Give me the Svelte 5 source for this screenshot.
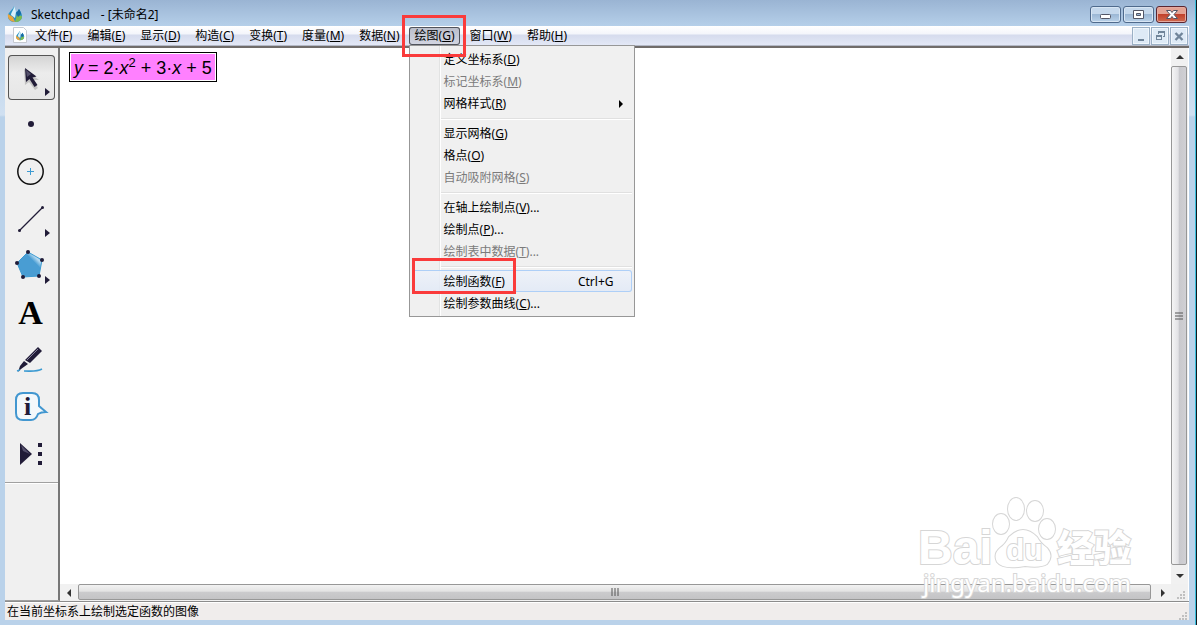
<script lang="ts">
  type Entry = { label: string; key: string; more?: boolean; disabled?: boolean; submenu?: boolean; shortcut?: string };

  const menus = [
    { label: '文件', key: 'F' },
    { label: '编辑', key: 'E' },
    { label: '显示', key: 'D' },
    { label: '构造', key: 'C' },
    { label: '变换', key: 'T' },
    { label: '度量', key: 'M' },
    { label: '数据', key: 'N' },
    { label: '绘图', key: 'G' },
    { label: '窗口', key: 'W' },
    { label: '帮助', key: 'H' }
  ];

  const graphMenu: Entry[][] = [
    [
      { label: '定义坐标系', key: 'D' },
      { label: '标记坐标系', key: 'M', disabled: true },
      { label: '网格样式', key: 'R', submenu: true }
    ],
    [
      { label: '显示网格', key: 'G' },
      { label: '格点', key: 'O' },
      { label: '自动吸附网格', key: 'S', disabled: true }
    ],
    [
      { label: '在轴上绘制点', key: 'V', more: true },
      { label: '绘制点', key: 'P', more: true },
      { label: '绘制表中数据', key: 'T', more: true, disabled: true }
    ],
    [
      { label: '绘制函数', key: 'F', shortcut: 'Ctrl+G' },
      { label: '绘制参数曲线', key: 'C', more: true }
    ]
  ];

  const tools = ['arrow', 'point', 'compass', 'line', 'polygon', 'text', 'marker', 'info', 'custom'];

  let openMenu = $state('G');
  let activeEntry = $state('绘制函数');
  let activeTool = $state('arrow');
</script>

{#snippet logo()}
  <path d="M7 0 C6 4 1 6 1 10 C1 14 4 16 8 16 C12 16 15 14 15 10 C15 7 13 5 12 3 C11 5 10 6 9 6 C9 4 8 2 7 0Z" fill="#2b93c4" />
  <path d="M7 0 C7 4 4 6 4 9 L8 12 L9 6 C9 4 8 2 7 0Z" fill="#d9f1fa" />
  <path d="M1 8 C0 12 3 16 8 16 L6 11Z" fill="#e9a43c" />
  <path d="M8 16 C12 16 15 14 15 10 L10 9Z" fill="#7dbb52" />
  <path d="M12 3 C11 5 10 6 9 7 L11 11 L14 8 C14 6 13 5 12 3Z" fill="#176aa4" />
{/snippet}

<div class="window">
  <header class="title-bar">
    <svg class="app-icon" viewBox="0 0 16 16" aria-hidden="true">{@render logo()}</svg>
    <h1><span>Sketchpad</span><span>- [未命名2]</span></h1>
    <div class="window-buttons">
      <button aria-label="最小化">
        <svg viewBox="0 0 29 16"><rect x="9.5" y="7.5" width="10" height="4" rx="1" fill="#fff" stroke="#535666" /></svg>
      </button>
      <button aria-label="还原">
        <svg viewBox="0 0 29 16"><path d="M9.5 3.5h10v8h-10z M12.5 6.5h4v2h-4z" fill="#fff" fill-rule="evenodd" stroke="#535666" /></svg>
      </button>
      <button class="close" aria-label="关闭">
        <svg viewBox="0 0 29 16"><path d="M9.5 3.5h4l1.500 2 1.500-2h4l-3.500 4 3.500 4h-4l-1.500-2-1.500 2h-4l3.500-4z" fill="#fff" stroke="#535666" /></svg>
      </button>
    </div>
  </header>

  <nav class="menu-bar">
    <svg class="doc-icon" viewBox="0 0 14 16" aria-hidden="true">
      <path d="M.5 .5h10l3 3v12H.5z" fill="#fff" stroke="#c4c8d0" />
      <g transform="translate(2.500 4) scale(.58)">{@render logo()}</g>
    </svg>
    {#each menus as menu}
      <div class="menu">
        <button class="menu-title" class:open={openMenu === menu.key} onclick={() => (openMenu = openMenu === menu.key ? '' : menu.key)}>
          {menu.label}(<u>{menu.key}</u>)
        </button>
        {#if menu.key === 'G' && openMenu === 'G'}
          <div class="dropdown">
            {#each graphMenu as group}
              <div class="group">
                {#each group as entry}
                  <button
                    class="entry"
                    class:active={entry.label === activeEntry}
                    disabled={entry.disabled}
                    onmouseenter={() => (activeEntry = entry.label)}
                  >
                    <span>{entry.label}(<u>{entry.key}</u>){entry.more ? '...' : ''}</span>
                    {#if entry.shortcut}
                      <span>{entry.shortcut}</span>
                    {/if}
                    {#if entry.submenu}
                      <svg class="submenu" viewBox="0 0 4 8"><path d="M0 0l4 4-4 4z" /></svg>
                    {/if}
                    {#if entry.shortcut}
                      <i class="mark mark-entry"></i>
                    {/if}
                  </button>
                {/each}
              </div>
            {/each}
          </div>
          <i class="mark mark-title"></i>
        {/if}
      </div>
    {/each}
    <div class="doc-buttons">
      <button aria-label="最小化文档"><svg viewBox="0 0 16 16"><path d="M5 11h6v2H5z" /></svg></button>
      <button aria-label="还原文档"><svg viewBox="0 0 16 16"><path d="M6 3h7v6h-2V8h1V5H7v1H6z M4 7h6v5H4z M5 9v2h4V9z" fill-rule="evenodd" /></svg></button>
      <button aria-label="关闭文档"><svg viewBox="0 0 16 16"><path d="M4.500 5l7 7M11.500 5l-7 7" stroke="#70859a" stroke-width="2.400" /></svg></button>
    </div>
  </nav>

  <main class="workspace">
    <aside class="toolbox">
      <div class="tools">
        {#each tools as tool}
          <button class="tool" class:selected={activeTool === tool} aria-label={tool} onclick={() => (activeTool = tool)}>
            <svg viewBox="0 0 47 45">
              {#if tool === 'arrow'}
                <path d="M16 14l1 16 4-3 6 8 3-2-5-8h6z" fill="#777" opacity=".35" />
                <path d="M17 13l1 14 3.500-3 5 8 3-2-5-7.500 4-1z" fill="#211c38" />
                <path d="M18 15l1 7 4-3z" fill="#8886a0" opacity=".5" />
              {:else if tool === 'point'}
                <circle cx="23" cy="22" r="3" fill="#211c38" />
              {:else if tool === 'compass'}
                <circle cx="22.500" cy="22.500" r="12.700" fill="none" stroke="#111" stroke-width="1.500" />
                <path d="M19 22.500h7M22.500 19v7" stroke="#3d9bd2" />
              {:else if tool === 'line'}
                <path d="M11 35L34 12" stroke="#211c38" stroke-width="1.200" />
                <circle cx="11.500" cy="34.500" r="1.500" fill="#211c38" />
                <circle cx="34.500" cy="11.500" r="1.500" fill="#211c38" />
              {:else if tool === 'polygon'}
                <defs>
                  <linearGradient id="facet" x1="1" y1="0" x2=".4" y2=".6">
                    <stop offset=".2" stop-color="#5aa9db" />
                    <stop offset=".38" stop-color="#b9dcf2" />
                    <stop offset=".6" stop-color="#499dd3" />
                  </linearGradient>
                </defs>
                <path d="M20 9L34 17 31 33 15 34 9 20z" fill="url(#facet)" stroke="#3d9bd2" />
                <g fill="#211c38">
                  <circle cx="20" cy="9" r="2" /><circle cx="34" cy="17" r="2" /><circle cx="31" cy="33" r="2" />
                  <circle cx="15" cy="34" r="2" /><circle cx="9" cy="20" r="2" />
                </g>
              {:else if tool === 'text'}
                <text x="22.500" y="34" text-anchor="middle" class="letter">A</text>
              {:else if tool === 'marker'}
                <path d="M30 10l4 4-12 12-5-3z" fill="#211c38" />
                <path d="M16 24l4 3-7 5-3 3 2-6z" fill="#211c38" />
                <path d="M30 12L19 23" stroke="#85819b" />
                <path d="M9 34l3-1M16 34c8 0 12 1 18-2" fill="none" stroke="#3d9bd2" stroke-width="1.600" />
              {:else if tool === 'info'}
                <path d="M15 9h9q7 0 7 7v6l7 6q-5 0-8 2-2 6-7 6h-8q-7 0-7-7V16q0-7 7-7z" fill="#f3f8fb" stroke="#4297d0" stroke-width="2" />
                <text x="19.500" y="31" text-anchor="middle" class="info">i</text>
              {:else}
                <path d="M12 12l12 11-12 11z" fill="#211c38" />
                <path d="M13 14l9 9-7-3z" fill="#777390" opacity=".6" />
                <path d="M30 12h4v4h-4zM30 21h4v4h-4zM30 30h4v4h-4z" fill="#211c38" />
              {/if}
              {#if tool === 'arrow' || tool === 'line' || tool === 'polygon'}
                <path d="M37 33l5 4-5 4z" fill="#211c38" />
              {/if}
            </svg>
          </button>
        {/each}
      </div>
    </aside>

    <section class="document">
      <div class="canvas">
        <div class="formula"><i>y</i> = 2·<i>x</i><sup>2</sup> + 3·<i>x</i> + 5</div>
      </div>
      <div class="scroll vertical">
        <button aria-label="向上滚动"><svg viewBox="0 0 8 8"><path d="M0 6l4-4 4 4z" /></svg></button>
        <div class="thumb"><svg viewBox="0 0 8 8"><path d="M0 1h8M0 4h8M0 7h8" stroke="#555" /></svg></div>
        <button aria-label="向下滚动"><svg viewBox="0 0 8 8"><path d="M0 2l4 4 4-4z" /></svg></button>
      </div>
      <div class="scroll horizontal">
        <button aria-label="向左滚动"><svg viewBox="0 0 8 8"><path d="M6 0L2 4l4 4z" /></svg></button>
        <div class="thumb"><svg viewBox="0 0 8 8"><path d="M1 0v8M4 0v8M7 0v8" stroke="#555" /></svg></div>
        <button aria-label="向右滚动"><svg viewBox="0 0 8 8"><path d="M2 0l4 4-4 4z" /></svg></button>
      </div>
      <div class="corner">
        <svg class="grip" viewBox="0 0 8 8"><path d="M6 0h2v2H6zM3 3h2v2H3zM6 3h2v2H6zM0 6h2v2H0zM3 6h2v2H3zM6 6h2v2H6z" /></svg>
      </div>

      <svg class="watermark" viewBox="0 0 230 110">
        <g class="outline">
          <text x="5" y="73" class="brand">Bai</text>
          <g transform="translate(-5 0)">
            <ellipse cx="93" cy="33" rx="8" ry="10" />
            <ellipse cx="108" cy="18" rx="8" ry="11" />
            <ellipse cx="127" cy="20" rx="8" ry="10" />
            <ellipse cx="139" cy="38" rx="8" ry="10" />
            <path d="M101 46q14-14 28 0 3 6 10 11 7 8 0 16-6 4-22 2-22 4-28-4-4-8 3-14 6-4 9-11z" />
          </g>
          <text x="93" y="69" class="du">du</text>
          <text x="144" y="71" class="jingyan">经验</text>
        </g>
        <text x="10" y="101" class="url">jingyan.baidu.com</text>
      </svg>
    </section>
  </main>

  <footer class="status">
    <span>在当前坐标系上绘制选定函数的图像</span>
    <svg class="grip" viewBox="0 0 8 8"><path d="M6 0h2v2H6zM3 3h2v2H3zM6 3h2v2H6zM0 6h2v2H0zM3 6h2v2H3zM6 6h2v2H6z" /></svg>
  </footer>
</div>

<style>
  :global(body) {
    margin: 0;
  }

  .window {
    box-sizing: border-box;
    display: flex;
    flex-direction: column;
    min-height: 100vh;
    padding: 0 8px 5px 5px;
    background:
      linear-gradient(to left, #101820 1px, #38bfdc 1px, #38bfdc 2px, transparent 2px),
      linear-gradient(#9ab4d3 0, #b5cfe9 26px, #d0e0f1 115px, #bad2ea 117px);
    color: #000;
    font: 12px/16px 'Noto Sans', 'Noto Sans CJK SC', sans-serif;
  }

  button {
    box-sizing: border-box;
    margin: 0;
    padding: 0;
    border: 0;
    background: none;
    color: inherit;
    font: inherit;
  }

  svg {
    display: block;
  }

  u {
    text-underline-offset: 1px;
  }

  .title-bar {
    display: flex;
    height: 26px;
    padding-left: 2px;
  }

  .app-icon {
    width: 16px;
    height: 16px;
    margin-top: 6px;
  }

  h1 {
    display: flex;
    gap: 11px;
    flex: 1;
    margin: 7px 0 0 8px;
    font: inherit;
  }

  .window-buttons {
    display: flex;
    gap: 2px;
    margin: 6px 2px 0 0;
  }

  .window-buttons button {
    width: 31px;
    height: 17px;
    border: 1px solid #4f6a8c;
    border-radius: 3px;
    background: linear-gradient(#c5d8ec 0 45%, #9cb8d5 50%, #b9d1e9);
    box-shadow: inset 0 0 0 1px #d8e6f4;
  }

  .window-buttons .close {
    border-color: #5b2630;
    background: linear-gradient(#e3a293 0 45%, #c1422c 50%, #cf6a4f);
    box-shadow: inset 0 0 0 1px #e5aaa0;
  }

  .menu-bar {
    display: flex;
    gap: 3px;
    height: 18px;
    padding: 1px 1px 0 8px;
    background: linear-gradient(#fff, #f3f5fb 8px, #d5dbed 9px, #e3e8f6);
    border-bottom: 1px solid #b3b8c6;
  }

  .doc-icon {
    width: 14px;
    height: 16px;
    margin-right: -1px;
  }

  .menu {
    position: relative;
  }

  .menu-title {
    display: block;
    height: 18px;
    padding: 0 6px;
    white-space: nowrap;
  }

  .menu-title.open {
    border-radius: 3px;
    background: linear-gradient(#babdc9, #d3d6e2);
    box-shadow: inset 0 0 0 1px #50535b;
  }

  .dropdown {
    position: absolute;
    z-index: 2;
    top: 18px;
    left: 0;
    box-sizing: border-box;
    width: 226px;
    padding: 2px;
    border: 1px solid #979797;
    background: linear-gradient(to right, transparent 29px, #e2e3e3 29px, #e2e3e3 30px, #fff 30px, #fff 31px, transparent 31px) #f0f0f0;
  }

  .group + .group {
    padding-top: 8px;
    background: linear-gradient(transparent 4px, #e0e0e0 4px, #e0e0e0 5px, #fff 5px, #fff 6px, transparent 6px) 29px 0 no-repeat;
  }

  .entry {
    position: relative;
    display: flex;
    align-items: center;
    justify-content: space-between;
    width: 100%;
    height: 22px;
    padding: 2px 18px 0 32px;
    border-radius: 3px;
    white-space: nowrap;
  }

  .entry:disabled {
    color: #7b7b7b;
  }

  .entry.active {
    background: linear-gradient(rgba(238, 242, 250, 0.8), rgba(224, 233, 247, 0.8));
    box-shadow: inset 0 0 0 1px #aecff7;
  }

  .submenu {
    width: 4px;
    height: 8px;
    margin-right: -9px;
  }

  /* tutorial frames laid over the menu */
  .mark {
    position: absolute;
    z-index: 3;
    box-sizing: border-box;
    border: 3px solid #fa3b3b;
    pointer-events: none;
  }

  .mark-title {
    top: -12px;
    left: -7px;
    width: 64px;
    height: 42px;
  }

  .mark-entry {
    top: -12px;
    left: 0;
    width: 104px;
    height: 36px;
  }

  .doc-buttons {
    display: flex;
    gap: 1px;
    margin-left: auto;
  }

  .doc-buttons button {
    width: 18px;
    height: 18px;
    border: 1px solid #9bb0c5;
    background: #deeaf6;
    box-shadow: inset 0 0 0 1px #eff6fc;
  }

  .doc-buttons svg {
    fill: #70859a;
  }

  .workspace {
    display: flex;
    flex: 1;
    border-top: 2px solid #706c6a;
    background: #f0f0f0;
  }

  .toolbox {
    flex: none;
    box-sizing: border-box;
    width: 55px;
    border-right: 2px solid #777;
    border-bottom: 1px solid #a0a0a0;
  }

  .tools {
    display: grid;
    gap: 2px;
    padding: 7px 0 6px 3px;
    border-bottom: 1px solid #a0a0a0;
    box-shadow: 0 1px #fff;
  }

  .tool {
    width: 47px;
    height: 45px;
    border-radius: 4px;
  }

  .tool.selected {
    background: linear-gradient(#d3d3d3, #ececec 40%, #e6e6e6);
    box-shadow: inset 0 0 0 1px #555;
  }

  .tool svg {
    margin-top: -1px;
  }

  .letter {
    font: bold 34px 'Liberation Serif', serif;
  }

  .info {
    font: bold 26px 'Liberation Serif', serif;
    fill: #211c38;
  }

  .document {
    position: relative;
    display: grid;
    flex: 1;
    grid-template-columns: 1fr 17px;
    grid-template-rows: 1fr 17px;
    border-right: 1px solid #fff;
    background: #fff;
  }

  .canvas {
    padding: 4px 9px;
  }

  .formula {
    box-sizing: border-box;
    width: max-content;
    height: 30px;
    padding: 0 4px;
    border: 1px solid #000;
    background: #ff80ff;
    box-shadow: inset 0 0 0 1px #fff;
    font: 18px/30px 'Liberation Sans', Arial, sans-serif;
  }

  .formula sup {
    font-size: 13px;
    line-height: 0;
  }

  .scroll {
    display: flex;
    background: #f1f1f1;
  }

  .scroll button {
    display: grid;
    place-items: center;
    flex: none;
    width: 17px;
    height: 17px;
  }

  .scroll svg {
    width: 8px;
    height: 8px;
    fill: #333;
  }

  .vertical {
    flex-direction: column;
  }

  .thumb {
    display: grid;
    place-items: center;
    flex: 1;
    border: 1px solid #979797;
    border-radius: 2px;
  }

  .vertical .thumb {
    margin: 1px 1px 2px 0;
    background: linear-gradient(to right, #f5f5f5, #e2e2e5 45%, #c9c9cd 50%, #d0d0d4);
  }

  .horizontal .thumb {
    margin: 0 3px 1px 1px;
    background: linear-gradient(#f2f2f2, #e3e3e3 45%, #cbcbcd 50%, #c3c3c5);
  }

  .corner {
    display: grid;
    place-items: end;
    padding: 0 3px 2px 0;
    background: #f0f0f0;
  }

  .grip {
    width: 8px;
    height: 8px;
    fill: #c0c0c0;
  }

  .watermark {
    position: absolute;
    right: 45px;
    bottom: 0;
    width: 230px;
    height: 110px;
    pointer-events: none;
  }

  .outline {
    fill: #fff;
    stroke: #d6d6d6;
    stroke-width: 2px;
    paint-order: stroke;
  }

  .brand {
    font: bold 48px 'Liberation Sans', sans-serif;
  }

  .du {
    font: bold 30px 'Liberation Sans', sans-serif;
  }

  .jingyan {
    font: 900 37px 'Noto Sans CJK SC', sans-serif;
  }

  .url {
    fill: #fff;
    stroke: #d6d6d6;
    stroke-width: 2px;
    paint-order: stroke;
    font: 24px 'Noto Sans', sans-serif;
  }

  .status {
    display: flex;
    justify-content: space-between;
    align-items: flex-end;
    height: 16px;
    padding: 2px 2px 0 2px;
    border-top: 1px solid #8c8c8c;
    box-shadow: inset 0 1px #fff;
    background: #f0edec;
  }
</style>
